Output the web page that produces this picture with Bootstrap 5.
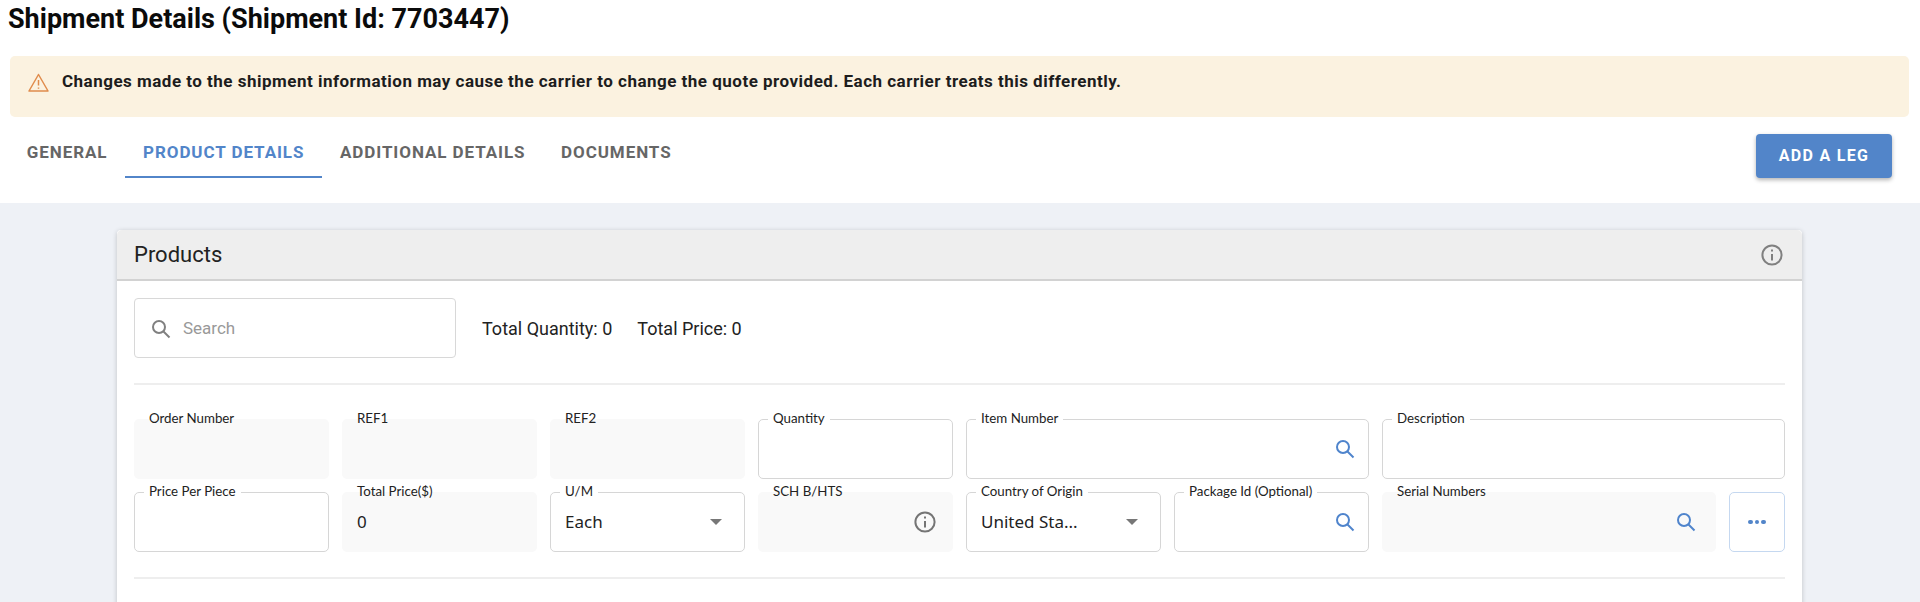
<!DOCTYPE html>
<html lang="en">
<head>
<meta charset="utf-8">
<title>Shipment Details</title>
<link href="https://cdn.jsdelivr.net/npm/bootstrap@5.3.0/dist/css/bootstrap.min.css" rel="stylesheet">
<style>
html,body{height:100%;overflow:hidden}
body{background:#eef1f6;font-family:"Lato","Noto Sans",sans-serif;color:#222}
.top-band{background:#fff;height:203px;padding:0 11px 0 10px}
.ship-title{font-family:Roboto,sans-serif;font-weight:700;font-size:27px;line-height:38px;height:36px;margin:0 0 20px -2px;color:#0b0b0b}
.warn-box{height:61px;margin:0;padding:0 18px 9px;background:#fbf2e0;border:0;border-radius:5px;gap:13px;font-family:Roboto,sans-serif;font-weight:700;font-size:17px;letter-spacing:.49px;color:#1d1d1d}
.tab-row{margin-top:11px;height:50px;margin-left:-1px}
.tab-row .nav-link{height:50px;padding:2px 17.8px 0;display:flex;align-items:center;font-family:Roboto,sans-serif;font-weight:700;font-size:17px;letter-spacing:.92px;color:#666;border-bottom:2px solid transparent;border-radius:0}
.tab-row .nav-link.active{color:#5285c9;border-bottom-color:#5285c9}
.leg-btn{width:136px;height:44px;margin:17px 17px 0 0;padding:0;background:#5285c9;border:0;border-radius:4px;box-shadow:0 2px 4px rgba(0,0,0,.3);font-family:Roboto,sans-serif;font-weight:700;font-size:16px;letter-spacing:1.3px;color:#fff}
.page-area{padding:27px 118px 0 117px}
.prod-card{border:0;border-radius:4px;box-shadow:0 1px 5px rgba(0,0,0,.2);min-height:420px}
.prod-head{height:51px;padding:0 19px 0 17px;background:#eee;border-bottom:2px solid #d2d2d2;font-family:Roboto,sans-serif;font-weight:400;font-size:22px;color:#222}
.prod-body{padding:17px 17px 0}
.search-box{width:322px;height:60px;padding:1px 16px 0;gap:12px;border:1.5px solid #d8d8d8;border-radius:4px;font-family:Roboto,sans-serif;font-size:17px;color:#999}
.totals{margin-left:26px;gap:25px;font-family:Roboto,sans-serif;font-size:18px;color:#222}
.soft-rule{height:2px;margin:0;border:0;background:#eee;opacity:1}
.rule-one{margin-top:25px}
.rule-two{margin-top:25px}
.field-grid{display:grid;grid-template-columns:repeat(8,1fr);gap:13px;margin-top:34px}
.span-two{grid-column:span 2}
.fld{position:relative;height:60px;border:1.5px solid #d6d6d6;border-radius:5px;background:#fff;display:flex;align-items:center;justify-content:space-between;padding:0 13px 0 14px;font-family:"Noto Sans",sans-serif;font-size:17px;color:#222}
.fld.off{border-color:transparent;background:#f9f9f9}
.fld-label{position:absolute;top:-10px;left:9px;padding:0 5px;background:#fff;font-family:Lato,"Noto Sans",sans-serif;font-size:13.3px;line-height:17px;color:#222;white-space:nowrap}
.fld.off .fld-label{background:transparent}
.caret-down{width:0;height:0;margin-right:9px;border-left:6px solid transparent;border-right:6px solid transparent;border-top:6px solid #777}
.fld svg{flex:none;margin-left:auto}
.serial-wrap{gap:13px}
.serial-wrap .fld{flex:1;padding-right:19px}
.sch-fld{padding-right:16px}
.dots-btn{width:56px;height:60px;padding:0;background:#fff;border:1.5px solid #c5d8f0;border-radius:5px;gap:2px}
.dots-btn i{width:4.5px;height:4.5px;border-radius:50%;background:#5285c9}
</style>
</head>
<body>
<div class="top-band">
  <h1 class="ship-title">Shipment Details (Shipment Id: 7703447)</h1>
  <div class="alert warn-box d-flex align-items-center" role="alert">
    <svg width="21" height="19" viewBox="0 0 21 19" fill="none" stroke="#e08c4c" stroke-width="1.5"><path d="M10.5 1.5 1 18h19z" stroke-linejoin="round"/><path d="M10.5 7v5.5M10.5 14.5v1.3"/></svg>
    <span>Changes made to the shipment information may cause the carrier to change the quote provided. Each carrier treats this differently.</span>
  </div>
  <div class="d-flex justify-content-between">
    <ul class="nav tab-row">
      <li class="nav-item"><a class="nav-link" href="#">GENERAL</a></li>
      <li class="nav-item"><a class="nav-link active" href="#">PRODUCT DETAILS</a></li>
      <li class="nav-item"><a class="nav-link" href="#">ADDITIONAL DETAILS</a></li>
      <li class="nav-item"><a class="nav-link" href="#">DOCUMENTS</a></li>
    </ul>
    <button type="button" class="btn leg-btn">ADD A LEG</button>
  </div>
</div>
<div class="page-area">
  <div class="card prod-card">
    <div class="card-header prod-head d-flex align-items-center justify-content-between">
      <span>Products</span>
      <svg width="22" height="22" viewBox="0 0 22 22" fill="none" stroke="#808080" stroke-width="2"><circle cx="11" cy="11" r="9.6"/><path d="M11 10v6.5M11 5.5v2"/></svg>
    </div>
    <div class="card-body prod-body">
      <div class="d-flex align-items-center">
        <div class="search-box d-flex align-items-center">
          <svg width="20" height="20" viewBox="0 0 20 20" fill="none" stroke="#808080" stroke-width="2"><circle cx="8" cy="8" r="6"/><path d="m12.5 12.5 6 6"/></svg>
          <span>Search</span>
        </div>
        <div class="totals d-flex"><span>Total Quantity: 0</span><span>Total Price: 0</span></div>
      </div>
      <hr class="soft-rule rule-one">
      <div class="field-grid">
        <div class="fld off"><span class="fld-label">Order Number</span></div>
        <div class="fld off"><span class="fld-label">REF1</span></div>
        <div class="fld off"><span class="fld-label">REF2</span></div>
        <div class="fld"><span class="fld-label">Quantity</span></div>
        <div class="fld span-two"><span class="fld-label">Item Number</span>
          <svg width="20" height="20" viewBox="0 0 20 20" fill="none" stroke="#4f84cc" stroke-width="2"><circle cx="8" cy="8" r="6"/><path d="m12.5 12.5 6 6"/></svg></div>
        <div class="fld span-two"><span class="fld-label">Description</span></div>

        <div class="fld"><span class="fld-label">Price Per Piece</span></div>
        <div class="fld off"><span class="fld-label">Total Price($)</span><span>0</span></div>
        <div class="fld"><span class="fld-label">U/M</span><span>Each</span><span class="caret-down"></span></div>
        <div class="fld off sch-fld"><span class="fld-label">SCH B/HTS</span>
          <svg width="22" height="22" viewBox="0 0 22 22" fill="none" stroke="#757575" stroke-width="2"><circle cx="11" cy="11" r="9.6"/><path d="M11 10v6.5M11 5.5v2"/></svg></div>
        <div class="fld"><span class="fld-label">Country of Origin</span><span>United Sta...</span><span class="caret-down"></span></div>
        <div class="fld"><span class="fld-label">Package Id (Optional)</span>
          <svg width="20" height="20" viewBox="0 0 20 20" fill="none" stroke="#4f84cc" stroke-width="2"><circle cx="8" cy="8" r="6"/><path d="m12.5 12.5 6 6"/></svg></div>
        <div class="span-two d-flex serial-wrap">
          <div class="fld off"><span class="fld-label">Serial Numbers</span>
            <svg width="20" height="20" viewBox="0 0 20 20" fill="none" stroke="#4f84cc" stroke-width="2"><circle cx="8" cy="8" r="6"/><path d="m12.5 12.5 6 6"/></svg></div>
          <button type="button" class="btn dots-btn d-flex align-items-center justify-content-center"><i></i><i></i><i></i></button>
        </div>
      </div>
      <hr class="soft-rule rule-two">
    </div>
  </div>
</div>
<script src="https://cdn.jsdelivr.net/npm/bootstrap@5.3.0/dist/js/bootstrap.bundle.min.js"></script>
</body>
</html>
